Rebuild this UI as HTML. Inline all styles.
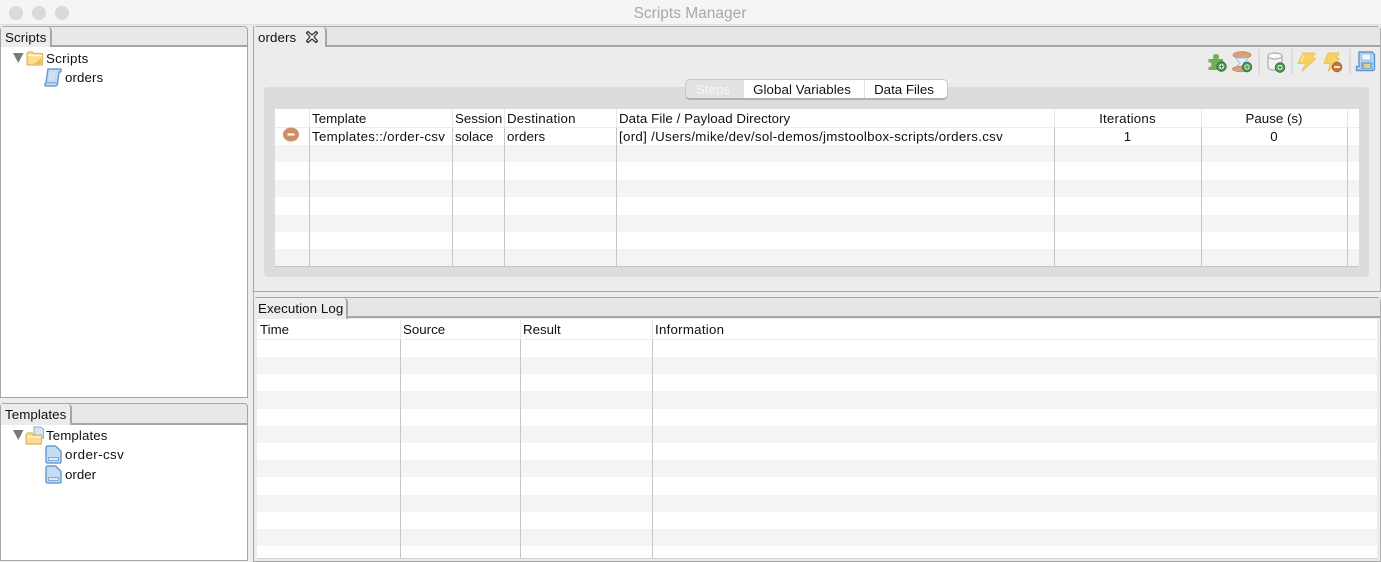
<!DOCTYPE html>
<html><head><meta charset="utf-8"><style>
html,body{margin:0;padding:0;width:1381px;height:562px;overflow:hidden;background:#ececec}
*{box-sizing:border-box}
body{font-family:"Liberation Sans",sans-serif;font-size:13.3px;color:#111;position:relative}
#r{position:absolute;left:0;top:0;width:1381px;height:562px;filter:blur(.35px)}
.a{position:absolute}
.t{position:absolute;white-space:nowrap;line-height:16px;height:16px}
.c{transform:translateX(-50%)}
.panel{position:absolute;border:1px solid #a6a6a6;border-radius:4px 4px 0 0;background:#e8e8e8}
.tab{position:absolute;background:#ececec;border:0;border-radius:0 4px 0 0}
.line{position:absolute;background:#a6a6a6;height:2px}
.w{position:absolute;background:#fff}
.g{position:absolute;background:#f4f4f4}
.s{position:absolute;width:1px;background:#c6c6c6}
.h{position:absolute;width:1px;background:#e6e6e6}
svg{position:absolute;overflow:visible}
</style></head><body><div id="r">
<div class="a" style="left:0;top:0;width:1381px;height:25px;background:#f5f5f5;border-bottom:1px solid #dedede"></div>
<div class="a" style="left:9px;top:6px;width:14px;height:14px;border-radius:50%;background:#dadada"></div>
<div class="a" style="left:32px;top:6px;width:14px;height:14px;border-radius:50%;background:#dadada"></div>
<div class="a" style="left:55px;top:6px;width:14px;height:14px;border-radius:50%;background:#dadada"></div>
<div class="t c" style="left:690px;top:6px;font-size:15.5px;color:#a8a8a8">Scripts Manager</div>

<!-- Scripts panel -->
<div class="panel" style="left:0;top:26px;width:248px;height:372px"></div>
<div class="line" style="left:1px;top:45px;width:246px"></div>
<div class="tab" style="left:1px;top:27px;width:51px;height:20px;border-right:2px solid #a6a6a6"></div>
<div class="w" style="left:1px;top:47px;width:246px;height:350px"></div>
<div class="t" style="left:5px;top:30px;letter-spacing:.12px">Scripts</div>
<svg style="left:13px;top:53px" width="11" height="10"><path d="M0 0H10.500L5.300 10Z" fill="#7a7a7a"/></svg>
<svg style="left:26px;top:51px" width="18" height="15"><path d="M1 2.500V14H16.500V2.500H8L6.500 1H2.500Z" fill="#f9dc90" stroke="#e5b45f" stroke-width="1.200"/><path d="M2 4.500H16" stroke="#fff6dc" stroke-width="1.500"/><path d="M8 13L15.500 7V13Z" fill="#efc050"/></svg>
<div class="t" style="left:46px;top:51px;letter-spacing:.28px">Scripts</div>
<svg style="left:44px;top:68px" width="18" height="19"><path d="M4 1H16.500Q18 1.500 16.500 4H15L13.500 15.500Q13.500 18 11 18H1.500Q0 17 2 14.500Z" fill="#c6dcf3" stroke="#6a9dd2" stroke-width="1.500"/><path d="M2.500 14.800H12.500" stroke="#6a9dd2"/><path d="M6 5H12M5.500 8H11.500M5 11H11" stroke="#e4eefa" stroke-dasharray="2 1"/></svg>
<div class="t" style="left:65px;top:70px;letter-spacing:.1px">orders</div>

<!-- Templates panel -->
<div class="panel" style="left:0;top:403px;width:248px;height:158px"></div>
<div class="line" style="left:1px;top:423px;width:246px"></div>
<div class="tab" style="left:1px;top:404px;width:71px;height:21px;border-right:2px solid #a6a6a6"></div>
<div class="w" style="left:1px;top:425px;width:246px;height:135px"></div>
<div class="t" style="left:5px;top:407px;letter-spacing:.08px">Templates</div>
<svg style="left:13px;top:430px" width="11" height="10"><path d="M0 0H10.500L5.300 10Z" fill="#7a7a7a"/></svg>
<svg style="left:25px;top:426px" width="20" height="19"><path d="M9 1H16L18.500 3.500V12H9Z" fill="#d6e6f7" stroke="#85acd8"/><path d="M1 9V18H16.500V9H8L7 7H2.500Z" fill="#f9dc90" stroke="#e4b25f" stroke-width="1.200"/><path d="M2 11H16" stroke="#fff2cf" stroke-width="1.500"/></svg>
<div class="t" style="left:46px;top:428px;letter-spacing:.1px">Templates</div>
<svg style="left:45px;top:445px" width="17" height="19"><path d="M1 3Q1 1 3 1H10.500L16 6.500V16.500Q16 18 14 18H3Q1 18 1 16.500Z" fill="#c6dcf3" stroke="#6a9dd2" stroke-width="1.500"/><path d="M3.500 12.500H13.500V15.500H3.500Z" fill="#dfebf9" stroke="#7fa9d8"/></svg>
<div class="t" style="left:65px;top:447px;letter-spacing:.42px">order-csv</div>
<svg style="left:45px;top:465px" width="17" height="19"><path d="M1 3Q1 1 3 1H10.500L16 6.500V16.500Q16 18 14 18H3Q1 18 1 16.500Z" fill="#c6dcf3" stroke="#6a9dd2" stroke-width="1.500"/><path d="M3.500 12.500H13.500V15.500H3.500Z" fill="#dfebf9" stroke="#7fa9d8"/></svg>
<div class="t" style="left:65px;top:467px">order</div>

<div class="a" style="left:253px;top:26px;width:1px;height:536px;background:#b4b4b4"></div>

<!-- Orders panel -->
<div class="panel" style="left:253px;top:26px;width:1128px;height:266px;background:#ececec;border-right:1px solid #b0b0b0"></div>
<div class="a" style="left:254px;top:27px;width:1126px;height:19px;background:#e6e6e6"></div>
<div class="line" style="left:254px;top:45px;width:1126px"></div>
<div class="tab" style="left:254px;top:27px;width:73px;height:20px;border-right:2px solid #a6a6a6"></div>
<div class="t" style="left:258px;top:30px;letter-spacing:.1px">orders</div>
<svg style="left:305px;top:30px" width="14" height="14"><path d="M1.500 3L3 1.500L7 5L11 1.500L12.500 3L9 7L12.500 11L11 12.500L7 9L3 12.500L1.500 11L5 7Z" fill="#fff" stroke="#333" stroke-width="1.300" stroke-linejoin="round"/></svg>

<!-- toolbar icons -->
<svg style="left:1207px;top:52px" width="21" height="21"><path d="M1.500 7H6.500Q5 2 9 2Q13 2 11.500 7H16V11Q19 10.500 19 13.500Q19 16.500 16 16.500V18H1.500V15Q4.500 15.500 4.500 12.500Q4.500 10 1.500 10.500Z" fill="#6fae5a"/><circle cx="14.500" cy="14.500" r="4.800" fill="#4a9550" stroke="#2d7037" stroke-width=".8"/><circle cx="14.500" cy="14.500" r="2.700" fill="#d8ecd6"/><path d="M12.500 14.500H16.500M14.500 12.500V16.500" stroke="#3c8545" stroke-width="1"/></svg>
<svg style="left:1232px;top:51px" width="22" height="22"><ellipse cx="10" cy="4" rx="9" ry="3.300" fill="#d9a173" stroke="#bd8a5f" stroke-width=".8"/><path d="M4 7C4.500 10 8 10.500 8 12C8 13.500 4.500 14 4 17H16C15.500 14 12 13.500 12 12C12 10.500 15.500 10 16 7Z" fill="#e3f0fb" stroke="#9cc3e6"/><ellipse cx="9" cy="18" rx="8.500" ry="2.700" fill="#d9a173" stroke="#bd8a5f" stroke-width=".8"/><circle cx="15" cy="16" r="4.800" fill="#4a9550" stroke="#2d7037" stroke-width=".8"/><circle cx="15" cy="16" r="2.700" fill="#d8ecd6"/><path d="M13 16H17M15 14V18" stroke="#3c8545" stroke-width="1"/></svg>
<div class="a" style="left:1258px;top:49px;width:2px;height:25px;background:#dcdcdc"></div>
<svg style="left:1267px;top:52px" width="20" height="21"><path d="M1 4V15Q1 18 8 18Q15 18 15 15V4Z" fill="#f2f2f2" stroke="#adadad" stroke-width="1.200"/><ellipse cx="8" cy="4" rx="7" ry="3" fill="#fbfbfb" stroke="#adadad" stroke-width="1.200"/><circle cx="13" cy="15.500" r="4.800" fill="#4a9550" stroke="#2d7037" stroke-width=".8"/><circle cx="13" cy="15.500" r="2.700" fill="#d8ecd6"/><path d="M11 15.500H15M13 13.500V17.500" stroke="#3c8545" stroke-width="1"/></svg>
<div class="a" style="left:1291px;top:49px;width:2px;height:25px;background:#dcdcdc"></div>
<svg style="left:1297px;top:52px" width="20" height="20"><path d="M6 1H18L15 6.500H19L5 19.500L8.500 11.500H1Z" fill="#f6d263" stroke="#ecbc45" stroke-width=".8"/><path d="M7 3L4 9" stroke="#fbe9a8" stroke-width="1.500"/></svg>
<svg style="left:1323px;top:52px" width="22" height="22"><path d="M5 1H16L13.500 6.500H16.500L5 19.500L7.500 11.500H1Z" fill="#f6d263" stroke="#ecbc45" stroke-width=".8"/><circle cx="14" cy="15" r="4.800" fill="#c9753f" stroke="#9e5a30" stroke-width=".8"/><path d="M11.200 15H16.800" stroke="#fff" stroke-width="1.800"/></svg>
<div class="a" style="left:1349px;top:49px;width:2px;height:25px;background:#dcdcdc"></div>
<svg style="left:1355px;top:51px" width="21" height="21"><path d="M4 1H17L19.500 3.500V17.500Q19.500 19.500 17.500 19.500H1.500V15.500H4Z" fill="#b8d3f0" stroke="#5e95cf" stroke-width="1.400"/><path d="M7 3H15.500V9H7Z" fill="#f2f8fe" stroke="#8db3dc" stroke-width=".7"/><path d="M6 11H17.500V18H6Z" fill="#7dacde"/><path d="M9 13H15V17H9Z" fill="#e5d27a"/></svg>

<!-- inner section -->
<div class="a" style="left:264px;top:87px;width:1105px;height:190px;background:#dcdcdc;border-radius:4px"></div>
<!-- seg control -->
<div class="a" style="left:685px;top:79px;width:263px;height:21px;background:#fff;border:1px solid #c8c8c8;border-bottom:2px solid #b0b0b0;border-radius:5px;overflow:hidden">
<div class="a" style="left:0;top:0;width:58px;height:19px;background:#e2e2e2"></div>
<div class="a" style="left:178px;top:0;width:1px;height:19px;background:#e2e2e2"></div>
</div>
<div class="t c" style="left:713px;top:82px;color:#f6f6f6">Steps</div>
<div class="t c" style="left:802px;top:82px;letter-spacing:.08px">Global Variables</div>
<div class="t c" style="left:904px;top:82px">Data Files</div>

<!-- Steps table -->
<div class="w" style="left:275px;top:109px;width:1084px;height:158px"></div>
<div class="a" style="left:275px;top:127px;width:1084px;height:1px;background:#ececec"></div>
<div class="g" style="left:275px;top:145px;width:1084px;height:17px"></div>
<div class="g" style="left:275px;top:180px;width:1084px;height:17px"></div>
<div class="g" style="left:275px;top:215px;width:1084px;height:17px"></div>
<div class="g" style="left:275px;top:249px;width:1084px;height:17px"></div>
<div class="a" style="left:275px;top:266px;width:1084px;height:1px;background:#c4c4c4"></div>
<div class="h" style="left:309px;top:109px;height:18px"></div><div class="s" style="left:309px;top:128px;height:139px"></div>
<div class="h" style="left:452px;top:109px;height:18px"></div><div class="s" style="left:452px;top:128px;height:139px"></div>
<div class="h" style="left:504px;top:109px;height:18px"></div><div class="s" style="left:504px;top:128px;height:139px"></div>
<div class="h" style="left:616px;top:109px;height:18px"></div><div class="s" style="left:616px;top:128px;height:139px"></div>
<div class="h" style="left:1054px;top:109px;height:18px"></div><div class="s" style="left:1054px;top:128px;height:139px"></div>
<div class="h" style="left:1201px;top:109px;height:18px"></div><div class="s" style="left:1201px;top:128px;height:139px"></div>
<div class="h" style="left:1347px;top:109px;height:18px"></div><div class="s" style="left:1347px;top:128px;height:139px"></div>
<div class="t" style="left:312px;top:111px;letter-spacing:.05px">Template</div>
<div class="t" style="left:455px;top:111px">Session</div>
<div class="t" style="left:507px;top:111px;letter-spacing:.2px">Destination</div>
<div class="t" style="left:619px;top:111px;letter-spacing:.07px">Data File / Payload Directory</div>
<div class="t c" style="left:1127.500px;top:111px;letter-spacing:.2px">Iterations</div>
<div class="t c" style="left:1274px;top:111px">Pause (s)</div>
<svg style="left:283px;top:127px" width="17" height="15"><ellipse cx="8" cy="7.500" rx="8" ry="7" fill="#cf8f68"/><path d="M4.500 7.500H11.500" stroke="#fff" stroke-width="2"/></svg>
<div class="t" style="left:312px;top:129px;letter-spacing:.29px">Templates::/order-csv</div>
<div class="t" style="left:455px;top:129px">solace</div>
<div class="t" style="left:507px;top:129px;letter-spacing:.1px">orders</div>
<div class="t" style="left:619px;top:129px;letter-spacing:.3px">[ord] /Users/mike/dev/sol-demos/jmstoolbox-scripts/orders.csv</div>
<div class="t c" style="left:1127.500px;top:129px">1</div>
<div class="t c" style="left:1274px;top:129px">0</div>

<!-- Execution Log -->
<div class="panel" style="left:253px;top:297px;width:1128px;height:265px;background:#ececec;border-right:1px solid #b0b0b0"></div>
<div class="a" style="left:254px;top:298px;width:1126px;height:19px;background:#e6e6e6"></div>
<div class="line" style="left:254px;top:316px;width:1126px"></div>
<div class="tab" style="left:254px;top:298px;width:94px;height:21px;border-right:2px solid #a6a6a6"></div>
<div class="t" style="left:258px;top:301px;letter-spacing:.08px">Execution Log</div>
<div class="w" style="left:257px;top:319px;width:1120px;height:239px"></div>
<div class="a" style="left:257px;top:339px;width:1120px;height:1px;background:#ececec"></div>
<div class="g" style="left:257px;top:357px;width:1120px;height:17px"></div>
<div class="g" style="left:257px;top:391px;width:1120px;height:18px"></div>
<div class="g" style="left:257px;top:426px;width:1120px;height:17px"></div>
<div class="g" style="left:257px;top:460px;width:1120px;height:17px"></div>
<div class="g" style="left:257px;top:495px;width:1120px;height:17px"></div>
<div class="g" style="left:257px;top:529px;width:1120px;height:17px"></div>
<div class="a" style="left:257px;top:558px;width:1121px;height:1px;background:#d0d0d0"></div>
<div class="h" style="left:400px;top:319px;height:20px"></div><div class="s" style="left:400px;top:340px;height:218px"></div>
<div class="h" style="left:520px;top:319px;height:20px"></div><div class="s" style="left:520px;top:340px;height:218px"></div>
<div class="h" style="left:652px;top:319px;height:20px"></div><div class="s" style="left:652px;top:340px;height:218px"></div>
<div class="t" style="left:260px;top:322px">Time</div>
<div class="t" style="left:403px;top:322px">Source</div>
<div class="t" style="left:523px;top:322px">Result</div>
<div class="t" style="left:655px;top:322px;letter-spacing:.25px">Information</div>
</div></body></html>
